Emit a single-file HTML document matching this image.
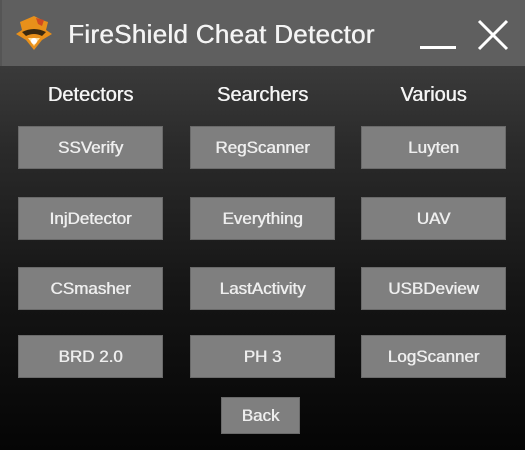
<!DOCTYPE html>
<html><head><style>
html,body{margin:0;padding:0}
body{width:525px;height:450px;overflow:hidden;position:relative;font-family:"Liberation Sans","DejaVu Sans",sans-serif;background:linear-gradient(180deg,#3a3a3a 66px,#2a2a2a 150px,#141414 300px,#050505 450px);color:#f4f4f4}
.bar{position:absolute;left:0;top:0;width:525px;height:66px;background:#5f5f5f;border-left:2px solid #555;box-sizing:border-box}
.title{position:absolute;left:66px;top:19px;font-size:26px;font-weight:normal;letter-spacing:0.3px;text-shadow:0.5px 0 0 #f4f4f4}
.h{position:absolute;top:84px;font-size:20px;font-weight:normal;text-shadow:0.5px 0 0 #f4f4f4;text-align:center;width:145px}
.b{position:absolute;width:145px;height:43px;background:#7f7f7f;border:1px solid #6a6a6a;box-sizing:border-box;text-align:center;line-height:41px;font-size:17px;font-weight:normal;text-shadow:0.5px 0 0 #eee;color:#eee}
</style></head><body>
<div class="bar">
<svg style="position:absolute;left:10px;top:12px" width="44" height="44" viewBox="0 0 44 44">
<path d="M22 4 L30 8 L36 10 L34 18 L40 22 L30 28 L22 38 L14 28 L4 22 L10 18 L8 10 Z" fill="#e8901a"/>
<path d="M10 20 Q22 14 34 20 L30 24 Q22 20 14 24 Z" fill="#3a2a10"/>
<path d="M16 26 L22 34 L28 26 Z" fill="#ffe0a0"/>
<circle cx="22" cy="29" r="3" fill="#fff"/>
<path d="M24 6 L32 8 L30 14 L26 12 Z" fill="#d04a20"/>
</svg>
<div class="title">FireShield Cheat Detector</div>
<div style="position:absolute;left:418px;top:46px;width:36px;height:3px;background:#fff"></div>
<svg style="position:absolute;left:475px;top:19px" width="32" height="32"><path d="M2 2 L30 30 M30 2 L2 30" stroke="#fff" stroke-width="3"/></svg>
</div>
<div class="h" style="left:18px">Detectors</div>
<div class="h" style="left:190px">Searchers</div>
<div class="h" style="left:361px">Various</div>

<div class="b" style="left:18px;top:126px">SSVerify</div>
<div class="b" style="left:190px;top:126px">RegScanner</div>
<div class="b" style="left:361px;top:126px">Luyten</div>

<div class="b" style="left:18px;top:197px">InjDetector</div>
<div class="b" style="left:190px;top:197px">Everything</div>
<div class="b" style="left:361px;top:197px">UAV</div>

<div class="b" style="left:18px;top:267px">CSmasher</div>
<div class="b" style="left:190px;top:267px">LastActivity</div>
<div class="b" style="left:361px;top:267px">USBDeview</div>

<div class="b" style="left:18px;top:335px">BRD 2.0</div>
<div class="b" style="left:190px;top:335px">PH 3</div>
<div class="b" style="left:361px;top:335px">LogScanner</div>

<div class="b" style="left:221px;top:397px;width:79px;height:37px;line-height:35px">Back</div>
</body></html>
